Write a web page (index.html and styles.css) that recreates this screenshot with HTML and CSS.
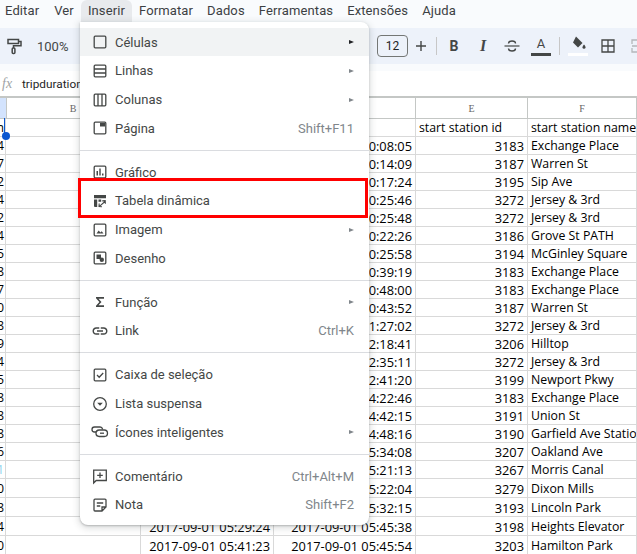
FILE: index.html
```html
<!DOCTYPE html>
<html lang="pt">
<head>
    <meta charset="UTF-8">
    <title>Planilha</title>
    <link rel="stylesheet" href="styles.css">
</head>
<body>
    <div class="menubar">
        <span class="menubar-item">Editar</span>
        <span class="menubar-item">Ver</span>
        <span class="menubar-item active">Inserir</span>
        <span class="menubar-item">Formatar</span>
        <span class="menubar-item">Dados</span>
        <span class="menubar-item">Ferramentas</span>
        <span class="menubar-item">Extensões</span>
        <span class="menubar-item">Ajuda</span>
    </div>

    <div class="toolbar">
        <svg class="tool-paint" width="18" height="18" viewBox="0 0 18 18"><path d="M3 2.5h10.5v4H3zM13.500 4.500H16v4.200H8.500v2.300" fill="none" stroke="#444746" stroke-width="1.500"/><rect x="7.200" y="11" width="2.700" height="5.500" rx="1" fill="none" stroke="#444746" stroke-width="1.500"/></svg>
        <span class="tool-zoom">100%</span>
        <span class="tool-size">12</span>
        <svg class="tool-plus" width="12" height="12" viewBox="0 0 12 12"><path d="M6 1v10M1 6h10" stroke="#444746" stroke-width="1.400"/></svg>
        <span class="tool-divider first"></span>
        <span class="tool-letter bold">B</span>
        <span class="tool-letter italic">I</span>
        <svg class="tool-strike" width="16" height="16" viewBox="0 0 16 16"><path d="M11.500 5.500c0-1.500-1.500-2.500-3.500-2.500S4.500 4 4.500 5.500M4.500 10.500c0 1.500 1.500 2.500 3.500 2.500s3.500-1 3.500-2.500" fill="none" stroke="#444746" stroke-width="1.400"/><path d="M.5 8h15" stroke="#444746" stroke-width="1.200"/></svg>
        <span class="tool-color">A</span>
        <span class="tool-divider second"></span>
        <span class="tool-fill">
            <svg width="18" height="14" viewBox="0 0 18 14"><path d="M7 .5l6.500 6.500-4.500 4.500-5-5z" fill="#444746"/><path d="M15 8.500c1 1.300 1.500 2 1.500 2.800a1.500 1.500 0 0 1-3 0c0-.8.5-1.500 1.500-2.800z" fill="#444746"/></svg>
        </span>
        <svg class="tool-borders" width="14" height="14" viewBox="0 0 14 14"><path d="M1 1h12v12H1zM7 1v12M1 7h12" fill="none" stroke="#444746" stroke-width="1.300"/></svg>
        <svg class="tool-merge" width="14" height="14" viewBox="0 0 14 14"><path d="M1 5V1h12v4M1 9v4h12V9M1 7h5M8 7h5" fill="none" stroke="#b4b7ba" stroke-width="1.300"/></svg>
    </div>

    <div class="formula-bar">
        <span class="fx">fx</span>
        <span class="formula-text">tripduration</span>
    </div>

    <div class="sheet">
        <div class="row head">
            <div class="cell corner"></div><div class="cell letter">B</div><div class="cell letter">C</div><div class="cell letter">D</div><div class="cell letter">E</div><div class="cell letter">F</div>
        </div>
        <div class="row"><div class="cell cut">tripduration</div><div class="cell"></div><div class="cell">starttime</div><div class="cell">stoptime</div><div class="cell">start station id</div><div class="cell">start station name</div></div>
        <div class="row"><div class="cell cut">4</div><div class="cell"></div><div class="cell"></div><div class="cell num">2017-09-01 00:08:05</div><div class="cell num">3183</div><div class="cell">Exchange Place</div></div>
        <div class="row"><div class="cell cut">7</div><div class="cell"></div><div class="cell"></div><div class="cell num">2017-09-01 00:14:09</div><div class="cell num">3187</div><div class="cell">Warren St</div></div>
        <div class="row"><div class="cell cut">2</div><div class="cell"></div><div class="cell"></div><div class="cell num">2017-09-01 00:17:24</div><div class="cell num">3195</div><div class="cell">Sip Ave</div></div>
        <div class="row"><div class="cell cut">4</div><div class="cell"></div><div class="cell"></div><div class="cell num">2017-09-01 00:25:46</div><div class="cell num">3272</div><div class="cell">Jersey &amp; 3rd</div></div>
        <div class="row"><div class="cell cut">2</div><div class="cell"></div><div class="cell"></div><div class="cell num">2017-09-01 00:25:48</div><div class="cell num">3272</div><div class="cell">Jersey &amp; 3rd</div></div>
        <div class="row"><div class="cell cut">4</div><div class="cell"></div><div class="cell"></div><div class="cell num">2017-09-01 00:22:26</div><div class="cell num">3186</div><div class="cell">Grove St PATH</div></div>
        <div class="row"><div class="cell cut">5</div><div class="cell"></div><div class="cell"></div><div class="cell num">2017-09-01 00:25:58</div><div class="cell num">3194</div><div class="cell">McGinley Square</div></div>
        <div class="row"><div class="cell cut">8</div><div class="cell"></div><div class="cell"></div><div class="cell num">2017-09-01 00:39:19</div><div class="cell num">3183</div><div class="cell">Exchange Place</div></div>
        <div class="row"><div class="cell cut">7</div><div class="cell"></div><div class="cell"></div><div class="cell num">2017-09-01 00:48:00</div><div class="cell num">3183</div><div class="cell">Exchange Place</div></div>
        <div class="row"><div class="cell cut">0</div><div class="cell"></div><div class="cell"></div><div class="cell num">2017-09-01 00:43:52</div><div class="cell num">3187</div><div class="cell">Warren St</div></div>
        <div class="row"><div class="cell cut">8</div><div class="cell"></div><div class="cell"></div><div class="cell num">2017-09-01 01:27:02</div><div class="cell num">3272</div><div class="cell">Jersey &amp; 3rd</div></div>
        <div class="row"><div class="cell cut">9</div><div class="cell"></div><div class="cell"></div><div class="cell num">2017-09-01 02:18:41</div><div class="cell num">3206</div><div class="cell">Hilltop</div></div>
        <div class="row"><div class="cell cut">4</div><div class="cell"></div><div class="cell"></div><div class="cell num">2017-09-01 02:35:11</div><div class="cell num">3272</div><div class="cell">Jersey &amp; 3rd</div></div>
        <div class="row"><div class="cell cut">5</div><div class="cell"></div><div class="cell"></div><div class="cell num">2017-09-01 02:41:20</div><div class="cell num">3199</div><div class="cell">Newport Pkwy</div></div>
        <div class="row"><div class="cell cut">8</div><div class="cell"></div><div class="cell"></div><div class="cell num">2017-09-01 04:22:46</div><div class="cell num">3183</div><div class="cell">Exchange Place</div></div>
        <div class="row"><div class="cell cut">8</div><div class="cell"></div><div class="cell"></div><div class="cell num">2017-09-01 04:42:15</div><div class="cell num">3191</div><div class="cell">Union St</div></div>
        <div class="row"><div class="cell cut">8</div><div class="cell"></div><div class="cell"></div><div class="cell num">2017-09-01 04:48:16</div><div class="cell num">3190</div><div class="cell">Garfield Ave Station</div></div>
        <div class="row"><div class="cell cut">6</div><div class="cell"></div><div class="cell"></div><div class="cell num">2017-09-01 05:34:08</div><div class="cell num">3207</div><div class="cell">Oakland Ave</div></div>
        <div class="row"><div class="cell cut light">1</div><div class="cell"></div><div class="cell"></div><div class="cell num">2017-09-01 05:21:13</div><div class="cell num">3267</div><div class="cell">Morris Canal</div></div>
        <div class="row tall"><div class="cell cut">0</div><div class="cell"></div><div class="cell"></div><div class="cell num">2017-09-01 05:22:04</div><div class="cell num">3279</div><div class="cell">Dixon Mills</div></div>
        <div class="row tall"><div class="cell cut">8</div><div class="cell"></div><div class="cell"></div><div class="cell num">2017-09-01 05:32:15</div><div class="cell num">3193</div><div class="cell">Lincoln Park</div></div>
        <div class="row tall"><div class="cell cut">4</div><div class="cell"></div><div class="cell num">2017-09-01 05:29:24</div><div class="cell num">2017-09-01 05:45:38</div><div class="cell num">3198</div><div class="cell">Heights Elevator</div></div>
        <div class="row tall"><div class="cell cut">0</div><div class="cell"></div><div class="cell num">2017-09-01 05:41:23</div><div class="cell num">2017-09-01 05:45:54</div><div class="cell num">3203</div><div class="cell">Hamilton Park</div></div>
    </div>

    <div class="selection"></div>
    <div class="selection-handle"></div>

    <div class="menu">
        <div class="menu-item hover">
            <svg class="icon" viewBox="0 0 18 18"><rect x="3.200" y="3.200" width="11.600" height="11.600" rx="1"/></svg>
            <span class="label">Células</span><span class="arrow dark"></span>
        </div>
        <div class="menu-item">
            <svg class="icon" viewBox="0 0 18 18"><rect x="3.200" y="3.200" width="11.600" height="11.600" rx="1"/><path d="M3 7h12M3 11h12"/></svg>
            <span class="label">Linhas</span><span class="arrow"></span>
        </div>
        <div class="menu-item">
            <svg class="icon" viewBox="0 0 18 18"><rect x="3.200" y="3.200" width="11.600" height="11.600" rx="1"/><path d="M7 3v12M11 3v12"/></svg>
            <span class="label">Colunas</span><span class="arrow"></span>
        </div>
        <div class="menu-item">
            <svg class="icon" viewBox="0 0 18 18"><rect x="3.200" y="3.200" width="11.600" height="11.600" rx="1"/><path class="solid" d="M9 4h5v3.500H9z"/></svg>
            <span class="label">Página</span><span class="shortcut">Shift+F11</span>
        </div>
        <div class="menu-sep"></div>
        <div class="menu-item">
            <svg class="icon" viewBox="0 0 18 18"><rect x="3.200" y="3.200" width="11.600" height="11.600" rx="1"/><path class="solid" d="M5.500 8H7v4.500H5.500zM8.300 5.500h1.400v7H8.300zM11 10.500h1.500v2H11z"/></svg>
            <span class="label">Gráfico</span>
        </div>
        <div class="menu-item">
            <svg class="icon" viewBox="0 0 18 18"><path class="solid" d="M3 3h12v3.200H3zM3 7.500h3.200V15H4a1 1 0 0 1-1-1z M7.500 7.500h2.700v2.200H7.500z"/><path d="M8.700 14.200l5.300-4.700M11.200 8.900l3-.2.200 3M8.200 11.500l-.2 3 3 .2" stroke-width="1.100"/></svg>
            <span class="label">Tabela dinâmica</span>
        </div>
        <div class="menu-item">
            <svg class="icon" viewBox="0 0 18 18"><rect x="3.200" y="3.200" width="11.600" height="11.600" rx="1"/><path class="solid" d="M5.500 12.500l2.200-3 1.700 2 1.300-1.300 1.800 2.300z"/></svg>
            <span class="label">Imagem</span><span class="arrow"></span>
        </div>
        <div class="menu-item">
            <svg class="icon" viewBox="0 0 18 18"><rect x="3.200" y="3.200" width="11.600" height="11.600" rx="1"/><path class="solid" d="M5.500 5.500h4.500v4.500H5.500z"/><circle class="solid" cx="10.800" cy="10.800" r="2.200"/></svg>
            <span class="label">Desenho</span>
        </div>
        <div class="menu-sep"></div>
        <div class="menu-item">
            <svg class="icon" viewBox="0 0 18 18"><path class="solid" d="M5 4h8v1.700H7.500L10.500 9l-3 3.300H13V14H5v-1.200L8.400 9 5 5.200z"/></svg>
            <span class="label">Função</span><span class="arrow"></span>
        </div>
        <div class="menu-item">
            <svg class="icon" viewBox="0 0 24 24"><path class="solid" d="M3.900 12c0-1.710 1.390-3.100 3.100-3.100h4V7H7c-2.760 0-5 2.240-5 5s2.240 5 5 5h4v-1.900H7c-1.710 0-3.100-1.390-3.100-3.100zM8 13h8v-2H8v2zm9-6h-4v1.900h4c1.710 0 3.100 1.390 3.100 3.100s-1.390 3.100-3.100 3.100h-4V17h4c2.760 0 5-2.240 5-5s-2.240-5-5-5z"/></svg>
            <span class="label">Link</span><span class="shortcut">Ctrl+K</span>
        </div>
        <div class="menu-sep"></div>
        <div class="menu-item">
            <svg class="icon" viewBox="0 0 18 18"><rect x="3.200" y="3.200" width="11.600" height="11.600" rx="1"/><path d="M6 9l2.200 2.200L12.200 7"/></svg>
            <span class="label">Caixa de seleção</span>
        </div>
        <div class="menu-item">
            <svg class="icon" viewBox="0 0 18 18"><circle cx="9" cy="9" r="6.300"/><path class="solid" d="M6.200 7.800h5.600L9 10.800z"/></svg>
            <span class="label">Lista suspensa</span>
        </div>
        <div class="menu-item">
            <svg class="icon" viewBox="0 0 18 18"><path d="M11.500 6.500V6a2.500 2.500 0 0 0-2.500-2H3.500a2.500 2.500 0 0 0 0 5H5"/><rect x="5" y="7" width="11.500" height="6.500" rx="3.200"/><path d="M9 10.200h4"/></svg>
            <span class="label">Ícones inteligentes</span><span class="arrow"></span>
        </div>
        <div class="menu-sep"></div>
        <div class="menu-item">
            <svg class="icon" viewBox="0 0 18 18"><path d="M2.700 3.200h12.600v10.300H5.200l-2.500 2.500zM9 5.500v5.500M6.200 8.300h5.600"/></svg>
            <span class="label">Comentário</span><span class="shortcut">Ctrl+Alt+M</span>
        </div>
        <div class="menu-item">
            <svg class="icon" viewBox="0 0 18 18"><path d="M4 3.200h10a1 1 0 0 1 1 1V11l-4 4H4a1 1 0 0 1-1-1V4.200a1 1 0 0 1 1-1zM11 15v-4h4M5.800 7h6.400M5.800 10h3.500"/></svg>
            <span class="label">Nota</span><span class="shortcut">Shift+F2</span>
        </div>
    </div>

    <div class="callout"></div>
</body>
</html>
```

FILE: styles.css
```css
html, body {
    margin: 0;
    height: 554px;
    overflow: hidden;
}

body {
    width: 637px;
    background-color: #f9fbfd;
    font-family: Roboto, "Liberation Sans", sans-serif;
    color: #444746;
    position: relative;
}

/* top menu */
.menubar {
    display: flex;
    height: 22px;
    font-size: 13px;
    letter-spacing: 0.12px;
    color: #3c4043;
}

.menubar-item {
    padding: 0 7px;
    line-height: 21px;
    border-radius: 6px 6px 0 0;
}

.menubar-item:first-child {
    padding: 0 8px 0 5px;
}

.menubar-item.active {
    background-color: #e8eaed;
}

/* toolbar */
.toolbar {
    display: flex;
    align-items: center;
    height: 36px;
    margin-top: 6px;
    background-color: #edf2fa;
    overflow: hidden;
}

.toolbar > * {
    flex: none;
}

.tool-paint {
    margin-left: 5px;
}

.tool-zoom {
    margin-left: 14px;
    width: 340px;
    font-size: 13px;
}

.tool-size {
    box-sizing: border-box;
    width: 31px;
    height: 22px;
    border: 1px solid #747775;
    border-radius: 4px;
    text-align: center;
    font-size: 12px;
    line-height: 20px;
    color: #1f1f1f;
}

.tool-plus {
    margin-left: 7px;
}

.tool-divider {
    width: 1px;
    height: 18px;
    background-color: #c7c7c7;
}

.tool-divider.first {
    margin-left: 9px;
}

.tool-divider.second {
    margin-left: 8px;
}

.tool-letter {
    width: 16px;
    text-align: center;
    font-size: 14px;
    font-weight: 700;
}

.tool-letter.bold {
    margin-left: 9px;
}

.tool-letter.italic {
    margin-left: 13px;
    font-family: "Liberation Serif", serif;
    font-style: italic;
    font-size: 16px;
}

.tool-strike {
    margin-left: 13px;
}

.tool-color {
    box-sizing: border-box;
    margin-left: 11px;
    width: 20px;
    height: 20px;
    border-bottom: 3px solid #444746;
    text-align: center;
    font-size: 13px;
    line-height: 16px;
}

.tool-fill {
    box-sizing: border-box;
    margin-left: 8px;
    width: 20px;
    height: 20px;
    border-bottom: 3px solid #ffffff;
    padding-left: 1px;
}

.tool-fill svg {
    display: block;
}

.tool-borders {
    margin-left: 13px;
}

.tool-merge {
    margin-left: 16px;
}

/* formula bar */
.formula-bar {
    display: flex;
    align-items: center;
    height: 25px;
    margin-top: 7px;
    background-color: #ffffff;
    border-bottom: 2px solid #c4c7c5;
}

.fx {
    margin-left: 2px;
    width: 20px;
    font-family: "Liberation Serif", serif;
    font-style: italic;
    font-size: 14px;
    color: #a0a3a6;
}

.formula-text {
    font-size: 11.8px;
    color: #1f1f1f;
}

/* grid */
.sheet {
    background-color: #ffffff;
    color: #000000;
    font-family: "Open Sans", "Noto Sans", sans-serif;
    font-size: 12.3px;
}

.row {
    display: grid;
    grid-template-columns: 6px 135px 133px 142px 112px 109px;
    height: 18px;
}

.row.head {
    height: 21px;
}

.row.tall {
    height: 19px;
}

.row.tall .cell {
    padding-top: 1px;
}

.cell {
    box-sizing: border-box;
    display: flex;
    align-items: center;
    padding: 0 3px;
    border-right: 1px solid #d9d9d9;
    border-bottom: 1px solid #d9d9d9;
    white-space: nowrap;
    overflow: hidden;
}

.cell.num {
    justify-content: flex-end;
    font-size: 12.8px;
}

.cell.cut {
    justify-content: flex-end;
    padding: 0 1px 0 0;
}

.cell.cut.light {
    color: #8fd3ee;
}

.cell.letter {
    justify-content: center;
    font-family: "Liberation Serif", serif;
    font-size: 10px;
    color: #666666;
    border-color: #c4c7c5;
}

.cell.corner {
    background-color: #d3e3fd;
    border-color: #c4c7c5;
}

/* selected cell marker */
.selection {
    position: absolute;
    left: 4px;
    top: 118px;
    width: 1px;
    height: 18px;
    background-color: #0b57d0;
}

.selection-handle {
    position: absolute;
    left: 2px;
    top: 132px;
    width: 8px;
    height: 8px;
    border-radius: 50%;
    background-color: #0b57d0;
}

/* open Inserir menu */
.menu {
    position: absolute;
    left: 80px;
    top: 22px;
    width: 289px;
    box-sizing: border-box;
    padding: 5.8px 0 6px;
    background-color: #ffffff;
    border-radius: 0 8px 8px 8px;
    box-shadow: 0 2px 6px 2px rgba(60, 64, 67, 0.15), 0 1px 2px rgba(60, 64, 67, 0.3);
    font-size: 13px;
}

.menu-item {
    display: flex;
    align-items: center;
    height: 28.7px;
    padding: 0 15px 0 11px;
}

.menu-item.hover {
    background-color: #f1f3f4;
}

.icon {
    width: 18px;
    height: 18px;
    margin-right: 6px;
    flex: none;
    fill: none;
    stroke: #444746;
    stroke-width: 1.300;
}

.icon .solid {
    fill: #444746;
    stroke: none;
}

.label {
    flex: 1;
}

.shortcut {
    color: #80868b;
}

.arrow {
    width: 0;
    height: 0;
    border-left: 5px solid #80868b;
    border-top: 2.500px solid transparent;
    border-bottom: 2.500px solid transparent;
}

.arrow.dark {
    border-left-color: #202124;
}

.menu-sep {
    height: 1px;
    margin: 7.15px 0;
    background-color: #dadce0;
}

/* red highlight drawn over the screenshot */
.callout {
    position: absolute;
    left: 78px;
    top: 178px;
    width: 290px;
    height: 40px;
    box-sizing: border-box;
    border: 3px solid #ff0000;
}
```
